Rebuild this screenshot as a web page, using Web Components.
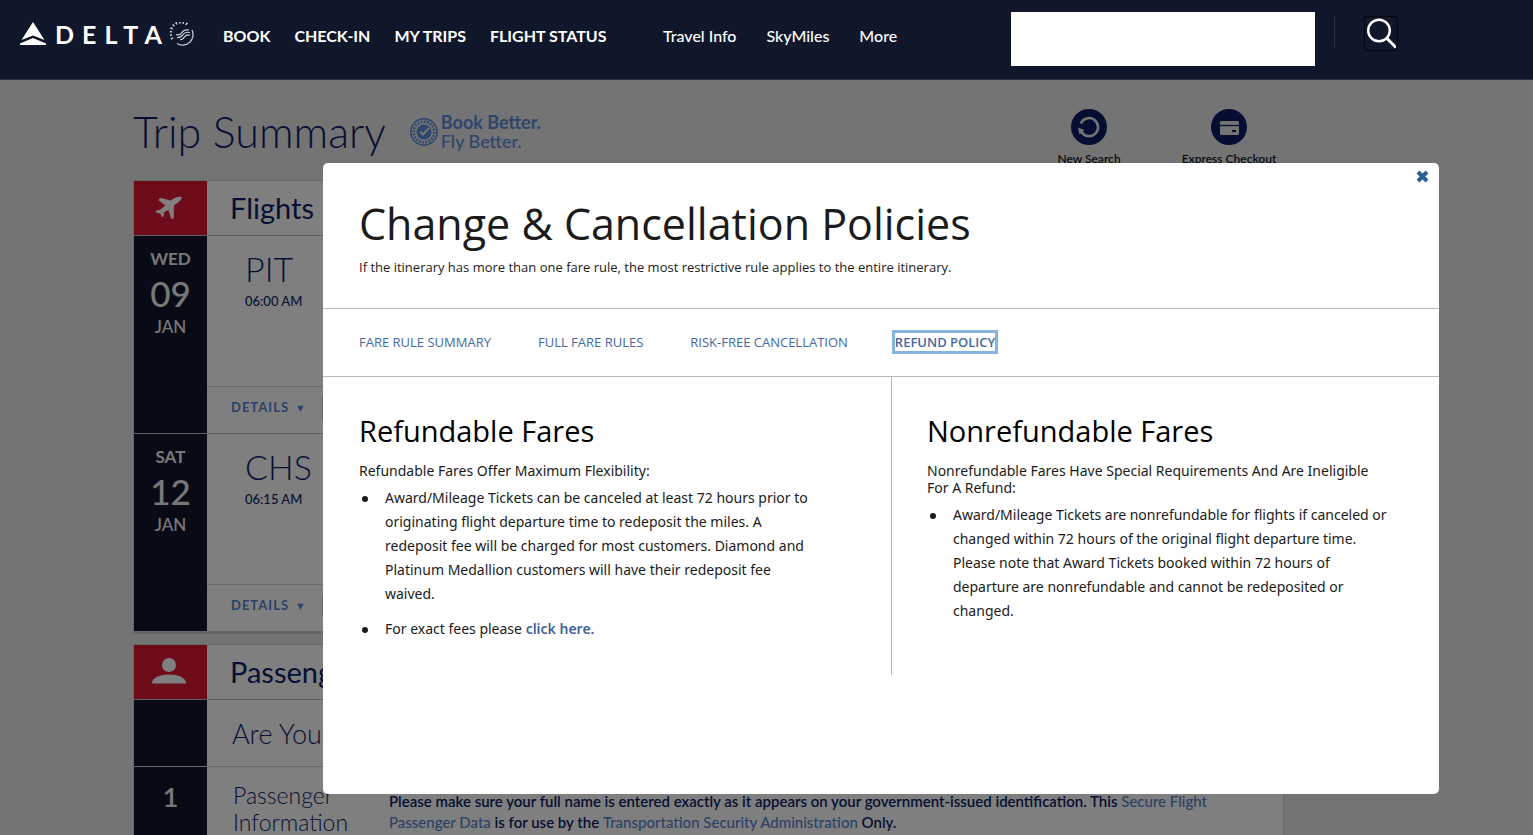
<!DOCTYPE html>
<html lang="en">
<head>
<meta charset="utf-8">
<title>Trip Summary</title>
<style>
    body {
        margin: 0;
        background-color: #e8e8e8;
        color: #0b1f66;
        font-family: Lato, "Open Sans", sans-serif;
        overflow: hidden;
    }

    main {
        height: calc(100vh - 108px);
        max-width: 1151px;
        padding: 28px 24px 0 133px;
        overflow: hidden;
    }

    a {
        color: inherit;
        text-decoration: none;
    }

    .title-row {
        display: flex;
        align-items: flex-start;
        justify-content: space-between;
        height: 72px;
    }

    .title-row > div {
        display: flex;
        gap: 24px;
    }

    .title-row .tools {
        gap: 30px;
    }

    h1 {
        margin: 0;
        font-size: 43px;
        line-height: 48px;
        font-weight: 300;
    }

    main a {
        color: #5584d0;
        font-weight: 500;
    }

    policy-modal a {
        color: #3f6198;
        font-weight: 600;
    }
</style>
</head>
<body>

<site-header>
    <a slot="primary" href="#book">BOOK</a>
    <a slot="primary" href="#check-in">CHECK-IN</a>
    <a slot="primary" href="#my-trips">MY TRIPS</a>
    <a slot="primary" href="#status">FLIGHT STATUS</a>
    <a slot="secondary" href="#travel-info">Travel Info</a>
    <a slot="secondary" href="#skymiles">SkyMiles</a>
    <a slot="secondary" href="#more">More</a>
</site-header>

<main>
    <div class="title-row">
        <div>
            <h1>Trip Summary</h1>
            <book-better></book-better>
        </div>
        <div class="tools">
            <trip-tool icon="refresh">New Search</trip-tool>
            <trip-tool icon="card">Express Checkout</trip-tool>
        </div>
    </div>

    <trip-card icon="plane" heading="Flights">
        <flight-row day="WED" date="09" month="JAN" airport="PIT" time="06:00 AM"></flight-row>
        <flight-row day="SAT" date="12" month="JAN" airport="CHS" time="06:15 AM"></flight-row>
    </trip-card>

    <trip-card icon="person" heading="Passengers">
        <passenger-row class="question"><h3 slot="label">Are You</h3></passenger-row>
        <passenger-row number="1">
            <h3 slot="label">Passenger Information</h3>
            Please make sure your full name is entered exactly as it appears on your government-issued identification. This <a href="#secure-flight">Secure Flight Passenger Data</a> is for use by the <a href="#tsa">Transportation Security Administration</a> Only.
        </passenger-row>
    </trip-card>
</main>

<policy-modal>
    <policy-column heading="Refundable Fares" intro="Refundable Fares Offer Maximum Flexibility:">
        <li>Award/Mileage Tickets can be canceled at least 72 hours prior to originating flight departure time to redeposit the miles. A redeposit fee will be charged for most customers. Diamond and Platinum Medallion customers will have their redeposit fee waived.</li>
        <li>For exact fees please <a href="#fees">click here.</a></li>
    </policy-column>
    <policy-column heading="Nonrefundable Fares" intro="Nonrefundable Fares Have Special Requirements And Are Ineligible For A Refund:">
        <li>Award/Mileage Tickets are nonrefundable for flights if canceled or changed within 72 hours of the original flight departure time. Please note that Award Tickets booked within 72 hours of departure are nonrefundable and cannot be redeposited or changed.</li>
    </policy-column>
</policy-modal>

<script>
const icons = {
    plane: `<svg width="28" height="26" viewBox="0 0 28 26" fill="#fff"><path d="M3.5 5.2 Q3.6 3.200 6 3 L15.500 5.500 L19.500 3 Q23 1.200 27 2 Q26.600 5 23 7.500 L19 10.500 L18.800 22.500 Q18 24.300 16.200 24 L13.400 14.800 L8.800 17.600 L8.800 21 L7 22.500 L5.400 18.800 L1 17.600 L.8 15.400 L5 14.800 L10.500 10.400 Z"/></svg>`,
    person: `<svg width="36" height="28" viewBox="0 0 36 28" fill="#fff"><circle cx="18" cy="7" r="7"/><path d="M1 25.500 V24 Q4 16.500 18 16.500 Q32 16.500 35 24 V25.500 Z"/></svg>`,
    refresh: `<svg width="36" height="36" viewBox="0 0 36 36"><circle cx="18" cy="18" r="18" fill="#0b1b66"/><path d="M9.800 14.500 A9 9 0 1 1 10.500 23" fill="none" stroke="#e8e8e8" stroke-width="2.600"/><path d="M7 18.500 L13.500 21 L8.500 25.500 Z" fill="#e8e8e8"/></svg>`,
    card: `<svg width="36" height="36" viewBox="0 0 36 36"><circle cx="18" cy="18" r="18" fill="#0b1b66"/><rect x="9" y="12" width="19" height="14" rx="1.500" fill="#e8e8e8"/><path d="M9 16.500 H28" stroke="#0b1b66" stroke-width="1.300"/><rect x="21" y="21" width="4" height="2" fill="#0b1b66"/></svg>`
};

const siteHeaderTemplate = document.createElement('template');
siteHeaderTemplate.innerHTML = `
<style>
    :host {
        display: flex;
        align-items: flex-start;
        position: relative;
        z-index: 2;
        height: 79px;
        padding-left: 20px;
        background-color: #11172b;
        border-bottom: 1px solid #2b3040;
        color: white;
    }

    .logo {
        display: flex;
        align-items: center;
        width: 203px;
        height: 34px;
        margin-top: 17px;
        color: inherit;
        text-decoration: none;
    }

    .logo b {
        margin-left: 8px;
        font-size: 25px;
        line-height: 34px;
        letter-spacing: 8px;
    }

    nav {
        display: flex;
        line-height: 20px;
        font-size: 16px;
        padding-top: 26px;
    }

    .primary {
        gap: 24px;
        font-weight: bold;
        width: 440px;
    }

    .secondary {
        gap: 30px;
        flex: 1;
        max-width: 348px;
        font-weight: 500;
    }

    .login {
        width: 304px;
        height: 54px;
        margin-top: 12px;
        background-color: white;
    }

    button {
        display: flex;
        width: 34px;
        height: 35px;
        margin: 16px 0 0 29px;
        padding: 1px;
        border: 1px solid #05070d;
        border-radius: 2px;
        background: none;
    }

    .divider {
        height: 31px;
        margin: 16px 0 0 19px;
        border-left: 1px solid #2e3446;
    }
</style>

<a class="logo" href="#home" aria-label="Delta home">
    <svg width="27" height="24" viewBox="0 0 27 24" fill="#fff"><path d="M13 0 L24.500 18 L13 13.500 L1.500 18 Z"/><path d="M13 16 L26 21.500 V23 H0 V21.500 Z"/></svg>
    <b>DELTA</b>
    <svg width="24" height="24" viewBox="0 0 24 24" fill="none" stroke="#cfd3dc" stroke-width="1.200"><path d="M22 8 A10.500 10.500 0 0 1 7 21.500"/><path d="M2.500 17 A10.500 10.500 0 0 1 18 3" stroke-width="2.600" stroke-dasharray="1.500 2"/><path d="M6 12.500 Q10 14 12 10.500 Q14 7 19 8 M7 15.500 Q11 16 13 12.500 Q15 9.500 20 10.500 M10 18 Q13.500 17 14.500 15 Q16 12.500 20 13"/></svg>
</a>
<nav class="primary"><slot name="primary"></slot></nav>
<nav class="secondary"><slot name="secondary"></slot></nav>
<div class="login"></div>
<div class="divider"></div>
<button type="button" aria-label="Search">
    <svg width="30" height="31" viewBox="0 0 30 31" fill="none" stroke="#fff"><circle cx="13" cy="12.500" r="10.800" stroke-width="2.400"/><path d="M20.500 20 L30 29.500" stroke-width="3"/></svg>
</button>
`;

class SiteHeader extends HTMLElement
{
    constructor()
    {
        super();

        this.attachShadow({mode: 'open'});
        this.shadowRoot.appendChild(siteHeaderTemplate.content.cloneNode(true));
    }
}

const bookBetterTemplate = document.createElement('template');
bookBetterTemplate.innerHTML = `
<style>
    :host {
        display: flex;
        align-items: center;
        gap: 3px;
        height: 48px;
        font-size: 18px;
        line-height: 19px;
        color: #5c8ad8;
    }

    b, span {
        display: block;
    }

    span {
        font-weight: 500;
    }
</style>

<svg width="28" height="28" viewBox="0 0 28 28" fill="none" stroke="#5c8ad8"><circle cx="14" cy="14" r="13.200" stroke-width="1.500"/><circle cx="14" cy="14" r="10.300" stroke-width="2.600" stroke-dasharray="1.800 1.400"/><circle cx="14" cy="14" r="7.500" fill="#5c8ad8" stroke="none"/><path d="M10 13.500 L13 16.500 L19 10" stroke="#e8e8e8" stroke-width="2"/></svg>
<div><b>Book Better.</b><span>Fly Better.</span></div>
`;

class BookBetter extends HTMLElement
{
    constructor()
    {
        super();

        this.attachShadow({mode: 'open'});
        this.shadowRoot.appendChild(bookBetterTemplate.content.cloneNode(true));
    }
}

const tripToolTemplate = document.createElement('template');
tripToolTemplate.innerHTML = `
<style>
    :host {
        display: block;
        width: 110px;
    }

    button {
        display: flex;
        flex-direction: column;
        align-items: center;
        gap: 6px;
        width: 100%;
        padding: 1px 0 0;
        border: none;
        background: none;
        color: #11172b;
        font: 600 12px/16px Lato, sans-serif;
    }

    .icon {
        height: 36px;
    }
</style>

<button type="button"><span class="icon"></span><slot></slot></button>
`;

class TripTool extends HTMLElement
{
    constructor()
    {
        super();

        this.attachShadow({mode: 'open'});
        this.shadowRoot.appendChild(tripToolTemplate.content.cloneNode(true));
        this.shadowRoot.querySelector('.icon').innerHTML = icons[this.getAttribute('icon')];
    }
}

const tripCardTemplate = document.createElement('template');
tripCardTemplate.innerHTML = `
<style>
    :host {
        display: block;
        margin-bottom: 10px;
        background-color: white;
        border: 1px solid #cfcfcf;
        border-bottom: 3px solid #cdcdd4;
    }

    header {
        display: flex;
        height: 54px;
        border-bottom: 1px solid #bdbdbd;
    }

    .tile {
        display: flex;
        align-items: center;
        justify-content: center;
        width: 73px;
        padding-right: 3px;
        box-sizing: border-box;
        background-color: #de1833;
    }

    h2 {
        margin: 0 0 0 23px;
        font-size: 29px;
        line-height: 54px;
        font-weight: normal;
    }
</style>

<header><div class="tile"></div><h2></h2></header>
<slot></slot>
`;

class TripCard extends HTMLElement
{
    constructor()
    {
        super();

        this.attachShadow({mode: 'open'});
        this.shadowRoot.appendChild(tripCardTemplate.content.cloneNode(true));
        this.shadowRoot.querySelector('.tile').innerHTML = icons[this.getAttribute('icon')];
        this.shadowRoot.querySelector('h2').textContent = this.getAttribute('heading');
    }
}

const flightRowTemplate = document.createElement('template');
flightRowTemplate.innerHTML = `
<style>
    :host {
        display: flex;
        height: 197px;
    }

    :host(:not(:last-child)) {
        border-bottom: 1px solid #bdbdbd;
    }

    .date {
        width: 73px;
        padding-top: 12px;
        box-sizing: border-box;
        background-color: #10162a;
        color: #f0f0f0;
        text-align: center;
        font-size: 17px;
        line-height: 22px;
        font-weight: 500;
    }

    .date > * {
        display: block;
    }

    .number {
        font-size: 35px;
        line-height: 46px;
    }

    .flight {
        flex: 1;
        display: flex;
        flex-direction: column;
    }

    .stop {
        flex: 1;
        padding: 11px 0 0 38px;
    }

    .airport {
        font-size: 34px;
        line-height: 44px;
        font-weight: 300;
    }

    time {
        display: block;
        margin-top: 1px;
        font-size: 13px;
        line-height: 18px;
        font-weight: 500;
    }

    .actions {
        display: flex;
        align-items: center;
        height: 47px;
        padding: 0 0 4px 24px;
        box-sizing: border-box;
        border-top: 1px solid #d8d8d8;
    }

    button {
        width: 92px;
        padding: 0;
        border: none;
        border-right: 1px solid #c8c8c8;
        background: none;
        color: #5584d0;
        text-align: left;
        font: bold 13px/18px Lato, sans-serif;
        letter-spacing: 1px;
    }

    button span {
        font: 8px/18px "DejaVu Sans", sans-serif;
        margin-left: 4px;
        vertical-align: 1px;
    }
</style>

<div class="date"><b></b><span class="number"></span><span class="month"></span></div>
<div class="flight">
    <div class="stop"><div class="airport"></div><time></time></div>
    <div class="actions"><button type="button">DETAILS <span>▼</span></button></div>
</div>
`;

class FlightRow extends HTMLElement
{
    constructor()
    {
        super();

        this.attachShadow({mode: 'open'});
        this.shadowRoot.appendChild(flightRowTemplate.content.cloneNode(true));

        this.setText('b', 'day');
        this.setText('.number', 'date');
        this.setText('.month', 'month');
        this.setText('.airport', 'airport');
        this.setText('time', 'time');
    }

    setText(selector, attribute)
    {
        this.shadowRoot.querySelector(selector).textContent = this.getAttribute(attribute);
    }
}

const passengerRowTemplate = document.createElement('template');
passengerRowTemplate.innerHTML = `
<style>
    :host {
        display: flex;
        min-height: 120px;
        font-size: 15px;
        line-height: 21px;
        font-weight: 600;
    }

    :host(.question) {
        min-height: 66px;
        border-bottom: 1px solid #d0d0d0;
    }

    .number {
        width: 73px;
        padding-top: 13px;
        box-sizing: border-box;
        background-color: #10162a;
        color: #f0f0f0;
        text-align: center;
        font-size: 27px;
        line-height: 34px;
    }

    ::slotted(h3) {
        width: 132px;
        margin: 0;
        padding: 15px 0 0 26px;
        font-size: 23px;
        line-height: 27px;
        font-weight: 300;
    }

    :host(.question) ::slotted(h3) {
        padding: 17px 0 0 25px;
        font-size: 27px;
        line-height: 34px;
    }

    p {
        flex: 1;
        max-width: 860px;
        margin: 24px 0 0 24px;
    }
</style>

<div class="number"></div>
<slot name="label"></slot>
<p><slot></slot></p>
`;

class PassengerRow extends HTMLElement
{
    constructor()
    {
        super();

        this.attachShadow({mode: 'open'});
        this.shadowRoot.appendChild(passengerRowTemplate.content.cloneNode(true));
        this.shadowRoot.querySelector('.number').textContent = this.getAttribute('number') || '';
    }
}

const policyModalTemplate = document.createElement('template');
policyModalTemplate.innerHTML = `
<style>
    :host {
        position: fixed;
        inset: 0;
        z-index: 1;
        padding: 163px 94px 0 323px;
        background-color: rgba(0, 0, 0, .5);
        font-family: "Open Sans", sans-serif;
        color: #1b1b1b;
    }

    .dialog {
        position: relative;
        padding-bottom: 119px;
        background-color: white;
        border-radius: 5px;
    }

    header {
        padding: 31px 36px;
        border-bottom: 1px solid #b8b8b8;
    }

    h2 {
        margin: 0;
        font-size: 43px;
        line-height: 60px;
        font-weight: normal;
    }

    p {
        margin: 4px 0 0;
        font-size: 13px;
        line-height: 19px;
    }

    .close {
        position: absolute;
        top: 7px;
        right: 10px;
        display: flex;
        padding: 0;
        border: none;
        background: none;
    }

    nav {
        display: flex;
        align-items: center;
        gap: 47px;
        height: 65px;
        padding: 0 0 2px 36px;
        border-bottom: 1px solid #b8b8b8;
        font-size: 13px;
        line-height: 18px;
    }

    nav a {
        color: #44689f;
        text-decoration: none;
    }

    nav .active {
        margin-left: -3px;
        border: 3px solid #86b2e2;
        font-weight: 600;
    }

    .columns {
        display: grid;
        grid-template-columns: 569px 1fr;
        min-height: 298px;
    }
</style>

<section class="dialog" role="dialog" aria-label="Change &amp; Cancellation Policies">
    <button class="close" type="button" aria-label="Close"><svg width="13" height="13" viewBox="0 0 13 13" stroke="#2c5f96" stroke-width="4"><path d="M2 2 L11 11 M11 2 L2 11"/></svg></button>
    <header>
        <h2>Change &amp; Cancellation Policies</h2>
        <p>If the itinerary has more than one fare rule, the most restrictive rule applies to the entire itinerary.</p>
    </header>
    <nav>
        <a href="#summary">FARE RULE SUMMARY</a>
        <a href="#full">FULL FARE RULES</a>
        <a href="#risk-free">RISK-FREE CANCELLATION</a>
        <a class="active" href="#refund">REFUND POLICY</a>
    </nav>
    <div class="columns"><slot></slot></div>
</section>
`;

class PolicyModal extends HTMLElement
{
    constructor()
    {
        super();

        this.attachShadow({mode: 'open'});
        this.shadowRoot.appendChild(policyModalTemplate.content.cloneNode(true));
    }
}

const policyColumnTemplate = document.createElement('template');
policyColumnTemplate.innerHTML = `
<style>
    :host {
        display: block;
        padding: 34px 47px 0 35px;
        font-family: "Noto Sans", "Open Sans", sans-serif;
        font-size: 14px;
    }

    :host(:not(:last-child)) {
        padding: 34px 76px 0 36px;
        border-right: 1px solid #b8b8b8;
    }

    h3 {
        margin: 0;
        font: 29px/40px "Open Sans", sans-serif;
        color: #000;
    }

    p {
        margin: 11px 0 7px;
        line-height: 17px;
    }

    ul {
        margin: 0;
        padding-left: 26px;
        line-height: 24px;
    }

    ::slotted(li) {
        display: block;
        margin-bottom: 11px;
    }

    ::slotted(li)::before {
        content: '';
        float: left;
        width: 6px;
        height: 6px;
        margin: 10px 0 0 -23px;
        border-radius: 50%;
        background-color: #1b1b1b;
    }
</style>

<h3></h3>
<p></p>
<ul><slot></slot></ul>
`;

class PolicyColumn extends HTMLElement
{
    constructor()
    {
        super();

        this.attachShadow({mode: 'open'});
        this.shadowRoot.appendChild(policyColumnTemplate.content.cloneNode(true));
        this.shadowRoot.querySelector('h3').textContent = this.getAttribute('heading');
        this.shadowRoot.querySelector('p').textContent = this.getAttribute('intro');
    }
}

window.customElements.define('site-header', SiteHeader);
window.customElements.define('book-better', BookBetter);
window.customElements.define('trip-tool', TripTool);
window.customElements.define('trip-card', TripCard);
window.customElements.define('flight-row', FlightRow);
window.customElements.define('passenger-row', PassengerRow);
window.customElements.define('policy-modal', PolicyModal);
window.customElements.define('policy-column', PolicyColumn);
</script>
</body>
</html>
